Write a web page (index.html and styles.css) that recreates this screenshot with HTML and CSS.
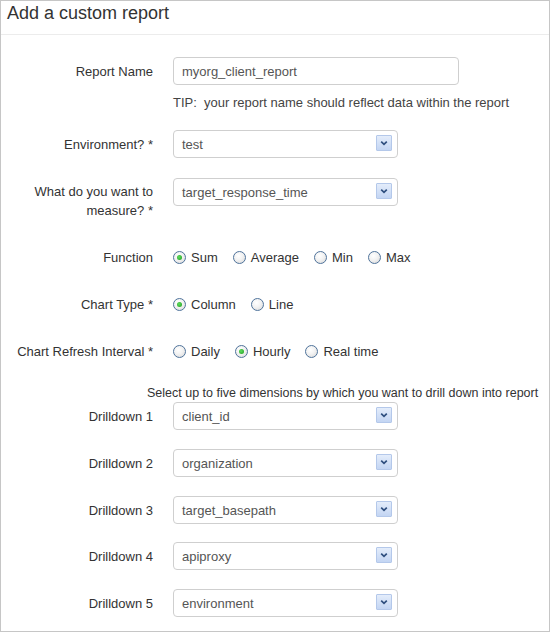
FILE: index.html
```html
<!DOCTYPE html>
<html>
<head>
<meta charset="utf-8">
<link rel="stylesheet" href="styles.css">
</head>
<body>
<div class="panel">
  <div class="panel-header"><h1 class="title">Add a custom report</h1></div>
  <form class="form">
    <div class="row row-name">
      <label class="label">Report Name</label>
      <div class="control"><div class="input wide">myorg_client_report</div></div>
    </div>
    <div class="row row-tip">
      <span></span>
      <div class="tip">TIP:&nbsp; your report name should reflect data within the report</div>
    </div>
    <div class="row row-env">
      <label class="label">Environment? *</label>
      <div class="control"><div class="select"><span>test</span><span class="arrow"><svg viewBox="0 0 15 15" width="15" height="15"><path d="M4.5 6 L7.5 9 L10.5 6" fill="none" stroke="#2f4f7f" stroke-width="1.8"/></svg></span></div></div>
    </div>
    <div class="row row-measure top">
      <label class="label two">What do you want to<br>measure? *</label>
      <div class="control"><div class="select"><span>target_response_time</span><span class="arrow"><svg viewBox="0 0 15 15" width="15" height="15"><path d="M4.5 6 L7.5 9 L10.5 6" fill="none" stroke="#2f4f7f" stroke-width="1.8"/></svg></span></div></div>
    </div>
    <div class="row row-radio first-radio">
      <label class="label">Function</label>
      <div class="radios">
        <span class="opt"><span class="radio on"></span>Sum</span>
        <span class="opt"><span class="radio"></span>Average</span>
        <span class="opt"><span class="radio"></span>Min</span>
        <span class="opt"><span class="radio"></span>Max</span>
      </div>
    </div>
    <div class="row row-radio">
      <label class="label">Chart Type *</label>
      <div class="radios">
        <span class="opt"><span class="radio on"></span>Column</span>
        <span class="opt"><span class="radio"></span>Line</span>
      </div>
    </div>
    <div class="row row-radio">
      <label class="label">Chart Refresh Interval *</label>
      <div class="radios">
        <span class="opt"><span class="radio"></span>Daily</span>
        <span class="opt"><span class="radio on"></span>Hourly</span>
        <span class="opt"><span class="radio"></span>Real time</span>
      </div>
    </div>
    <div class="hint">Select up to five dimensions by which you want to drill down into report</div>
    <div class="row row-dd first-dd">
      <label class="label">Drilldown 1</label>
      <div class="control"><div class="select"><span>client_id</span><span class="arrow"><svg viewBox="0 0 15 15" width="15" height="15"><path d="M4.5 6 L7.5 9 L10.5 6" fill="none" stroke="#2f4f7f" stroke-width="1.8"/></svg></span></div></div>
    </div>
    <div class="row row-dd">
      <label class="label">Drilldown 2</label>
      <div class="control"><div class="select"><span>organization</span><span class="arrow"><svg viewBox="0 0 15 15" width="15" height="15"><path d="M4.5 6 L7.5 9 L10.5 6" fill="none" stroke="#2f4f7f" stroke-width="1.8"/></svg></span></div></div>
    </div>
    <div class="row row-dd">
      <label class="label">Drilldown 3</label>
      <div class="control"><div class="select"><span>target_basepath</span><span class="arrow"><svg viewBox="0 0 15 15" width="15" height="15"><path d="M4.5 6 L7.5 9 L10.5 6" fill="none" stroke="#2f4f7f" stroke-width="1.8"/></svg></span></div></div>
    </div>
    <div class="row row-dd row-dd-tight">
      <label class="label">Drilldown 4</label>
      <div class="control"><div class="select"><span>apiproxy</span><span class="arrow"><svg viewBox="0 0 15 15" width="15" height="15"><path d="M4.5 6 L7.5 9 L10.5 6" fill="none" stroke="#2f4f7f" stroke-width="1.8"/></svg></span></div></div>
    </div>
    <div class="row row-dd">
      <label class="label">Drilldown 5</label>
      <div class="control"><div class="select"><span>environment</span><span class="arrow"><svg viewBox="0 0 15 15" width="15" height="15"><path d="M4.5 6 L7.5 9 L10.5 6" fill="none" stroke="#2f4f7f" stroke-width="1.8"/></svg></span></div></div>
    </div>
  </form>
</div>
</body>
</html>
```
FILE: styles.css
```css
* { box-sizing: border-box; }
html, body { margin: 0; padding: 0; background: #fff; }
body {
  font-family: "Liberation Sans", Arial, sans-serif;
  font-size: 13px;
  color: #333;
}
.panel {
  width: 550px;
  height: 632px;
  border: 1px solid #c6c6c6;
  background: #fff;
}
.panel-header {
  height: 34px;
  border-bottom: 1px solid #ececec;
  padding: 1px 0 0 6px;
}
.title {
  margin: 0;
  font-size: 18px;
  font-weight: normal;
  line-height: 22px;
  color: #333;
}
.form {
  padding-top: 22px;
}
.row {
  display: grid;
  grid-template-columns: 152px 1fr;
  column-gap: 20px;
  align-items: center;
}
.row.top { align-items: start; }
.label {
  text-align: right;
  color: #333;
  line-height: 19px;
}
.label.two { padding-top: 4px; }
.control { display: flex; }
.input, .select {
  height: 28px;
  border: 1px solid #cfcfcf;
  border-radius: 4px;
  background: #fff;
  padding: 0 0 0 8px;
  display: flex;
  align-items: center;
  color: #555;
}
.input.wide { width: 286px; }
.select {
  width: 225px;
  justify-content: space-between;
  padding-right: 5px;
}
.arrow {
  width: 16px;
  height: 16px;
  border: 1px solid #b4c8ea;
  background: linear-gradient(#e4edfb, #c3d5f3);
  display: flex;
  align-items: center;
  justify-content: center;
  border-radius: 1px;
  margin-top: -2px;
}
.arrow svg { display: block; width: 14px; height: 14px; }
.row-tip { margin-top: 10px; }
.tip { line-height: 16px; color: #444; }
.row-env { margin-top: 19px; }
.row-measure { margin-top: 20px; }
.row-radio { margin-top: 27px; height: 20px; }
.first-radio { margin-top: 27px; }
.radios { display: flex; align-items: center; gap: 15px; }
.opt { display: inline-flex; align-items: center; color: #333; }
.radio {
  width: 13px;
  height: 13px;
  border-radius: 50%;
  border: 1px solid #4f739b;
  background: radial-gradient(circle at 40% 35%, #ffffff 0%, #f2f2f2 45%, #d6d6d6 100%);
  margin-right: 5px;
  position: relative;
}
.radio.on::after {
  content: "";
  position: absolute;
  left: 3px;
  top: 3px;
  width: 5px;
  height: 5px;
  border-radius: 50%;
  background: radial-gradient(circle at 40% 40%, #5fdc5f, #1c9b1c);
}
.hint {
  margin-top: 24px;
  padding-left: 146px;
  font-size: 12.5px;
  line-height: 16px;
  color: #333;
}
.row-dd { margin-top: 19px; }
.row-dd.row-dd-tight { margin-top: 18px; }
.first-dd { margin-top: 1px; }
```
